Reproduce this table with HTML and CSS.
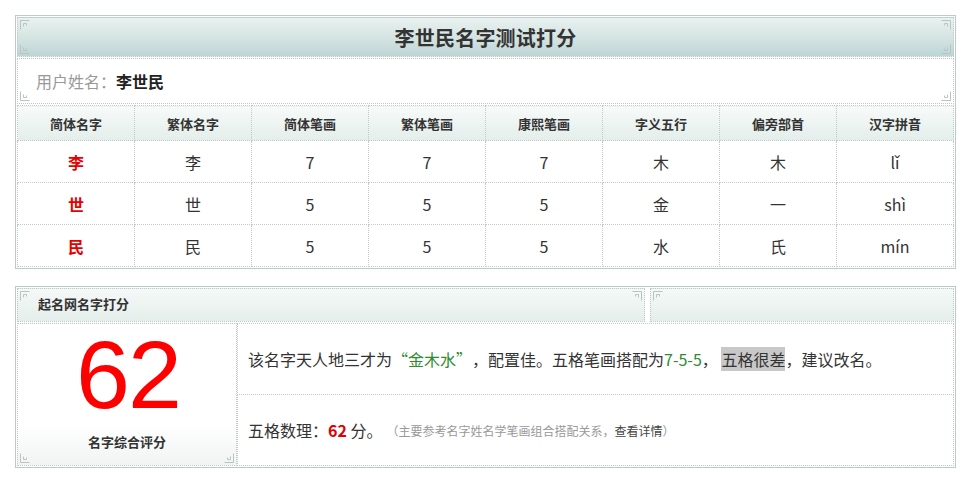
FILE: index.html
```html
<!DOCTYPE html>
<html lang="zh">
<head>
<meta charset="utf-8">
<title>李世民名字测试打分</title>
<link rel="stylesheet" href="styles.css">
</head>
<body>
<div class="page">
  <section class="panel">
    <div class="title box">
      <svg class="orn tl" viewBox="0 0 10 10"><path d="M0.5 9.5V0.5H9.5M3.5 6.5V3.5H6.5V5.5"/></svg>
      <svg class="orn tr" viewBox="0 0 10 10"><path d="M0.5 9.5V0.5H9.5M3.5 6.5V3.5H6.5V5.5"/></svg>
      <svg class="orn bl" viewBox="0 0 10 10"><path d="M0.5 9.5V0.5H9.5M3.5 6.5V3.5H6.5V5.5"/></svg>
      <svg class="orn br" viewBox="0 0 10 10"><path d="M0.5 9.5V0.5H9.5M3.5 6.5V3.5H6.5V5.5"/></svg>
      <h1>李世民名字测试打分</h1>
    </div>
    <div class="user box">
      <svg class="orn bl" viewBox="0 0 10 10"><path d="M0.5 9.5V0.5H9.5M3.5 6.5V3.5H6.5V5.5"/></svg>
      <svg class="orn br" viewBox="0 0 10 10"><path d="M0.5 9.5V0.5H9.5M3.5 6.5V3.5H6.5V5.5"/></svg>
      <span class="label">用户姓名：</span><strong>李世民</strong>
    </div>
    <table class="chars">
      <thead>
        <tr>
          <th>简体名字</th><th>繁体名字</th><th>简体笔画</th><th>繁体笔画</th><th>康熙笔画</th><th>字义五行</th><th>偏旁部首</th><th>汉字拼音</th>
        </tr>
      </thead>
      <tbody>
        <tr><td class="hz">李</td><td>李</td><td>7</td><td>7</td><td>7</td><td>木</td><td>木</td><td>lǐ</td></tr>
        <tr><td class="hz">世</td><td>世</td><td>5</td><td>5</td><td>5</td><td>金</td><td>一</td><td>shì</td></tr>
        <tr><td class="hz">民</td><td>民</td><td>5</td><td>5</td><td>5</td><td>水</td><td>氏</td><td>mín</td></tr>
      </tbody>
    </table>
  </section>

  <section class="panel score">
    <div class="score-head">
      <div class="head-cell box">
        <svg class="orn tl" viewBox="0 0 10 10"><path d="M0.5 9.5V0.5H9.5M3.5 6.5V3.5H6.5V5.5"/></svg>
        <svg class="orn tr" viewBox="0 0 10 10"><path d="M0.5 9.5V0.5H9.5M3.5 6.5V3.5H6.5V5.5"/></svg>
        <h2>起名网名字打分</h2>
      </div>
      <div class="head-cell box">
        <svg class="orn tl" viewBox="0 0 10 10"><path d="M0.5 9.5V0.5H9.5M3.5 6.5V3.5H6.5V5.5"/></svg>
      </div>
    </div>
    <div class="score-body">
      <div class="total box">
        <svg class="orn bl" viewBox="0 0 10 10"><path d="M0.5 9.5V0.5H9.5M3.5 6.5V3.5H6.5V5.5"/></svg>
        <svg class="orn br" viewBox="0 0 10 10"><path d="M0.5 9.5V0.5H9.5M3.5 6.5V3.5H6.5V5.5"/></svg>
        <div class="big">62</div>
        <div class="caption">名字综合评分</div>
      </div>
      <div class="detail">
        <div class="line box">该名字天人地三才为<span class="green">“金木水”</span>，配置佳。五格笔画搭配为<span class="green">7-5-5</span>， <span class="hl">五格很差</span>，建议改名。</div>
        <div class="line box">五格数理：<b class="red">62</b> 分。<small>（主要参考名字姓名学笔画组合搭配关系，<span class="more">查看详情</span>）</small></div>
      </div>
    </div>
  </section>
</div>
</body>
</html>
```

FILE: styles.css
```css
* { box-sizing: border-box; }
html, body { margin: 0; padding: 0; background: #fff; }
body {
  font-family: "Noto Sans CJK SC", "Noto Sans", sans-serif;
  color: #333;
  font-size: 16px;
}
.page {
  width: 975px;
  padding: 15px 19px 0 15px;
}
.panel {
  width: 941px;
  border: 1px solid #b9ccc8;
  padding: 1px;
  background: #fff;
}
.box {
  position: relative;
  border: 1px dotted #c3c9c7;
}
.orn {
  position: absolute;
  width: 10px;
  height: 10px;
  fill: none;
  stroke: #b7c6c2;
  stroke-width: 1;
}
.orn.tl { left: 2px; top: 2px; }
.orn.tr { right: 2px; top: 2px; transform: scaleX(-1); }
.orn.bl { left: 2px; bottom: 2px; transform: scaleY(-1); }
.orn.br { right: 2px; bottom: 2px; transform: scale(-1, -1); }

.title {
  height: 40px;
  background: linear-gradient(#e9f2f0, #d3e3e1 55%, #bcd5d5);
  display: flex;
  align-items: center;
  justify-content: center;
}
.title h1 {
  margin: 0;
  font-size: 20px;
  font-weight: 700;
  color: #333;
  letter-spacing: 0.2px;
}
.user {
  margin-top: 1px;
  height: 46px;
  display: flex;
  align-items: center;
  padding-left: 18px;
  font-size: 16px;
}
.user .label { color: #999; }
.user strong { color: #222; font-weight: 700; }

.chars {
  margin-top: 1px;
  width: 100%;
  border-collapse: collapse;
  table-layout: fixed;
}
.chars th, .chars td {
  border: 1px dotted #c3c9c7;
  text-align: center;
  padding: 0;
}
.chars th {
  height: 35px;
  font-size: 13px;
  font-weight: 700;
  color: #333;
  background: linear-gradient(#f7faf9, #e3eeea);
}
.chars td {
  height: 42px;
  font-size: 16px;
  color: #333;
}
.chars td.hz {
  color: #e60000;
  font-weight: 700;
}

.score { margin-top: 17px; }
.score-head {
  display: grid;
  grid-template-columns: 628px 1fr;
  column-gap: 5px;
}
.head-cell {
  height: 34px;
  background: linear-gradient(#f5f9f7, #e4eeea);
  display: flex;
  align-items: center;
  padding-left: 20px;
  padding-bottom: 3px;
}
.head-cell h2 {
  margin: 0;
  font-size: 13px;
  font-weight: 700;
  color: #333;
}
.score-body {
  display: flex;
  margin-top: 1px;
}
.total {
  width: 220px;
  height: 143px;
  flex: none;
  display: flex;
  flex-direction: column;
  align-items: center;
  background: linear-gradient(#fff 70%, #f1f4f3);
}
.big {
  font-family: "Liberation Sans", Arial, sans-serif;
  font-size: 97px;
  line-height: 108px;
  height: 108px;
  color: #ff0000;
  margin-top: -3px;
  letter-spacing: -2px;
  margin-right: -2px;
}
.caption {
  margin-top: 3px;
  font-size: 13px;
  line-height: 19px;
  font-weight: 700;
  color: #333;
}
.detail {
  flex: 1;
  display: flex;
  flex-direction: column;
}
.line {
  flex: 1;
  display: flex;
  align-items: center;
  padding-left: 10px;
  font-size: 16px;
  color: #333;
  white-space: pre;
}
.line + .line { border-top: none; }
.green { color: #2e8b2e; }
.hl { background: #c8c8c8; }
.red { color: #e00000; font-weight: 700; }
.line small {
  font-size: 12px;
  color: #999;
  margin-left: 4px;
}
.line small .more { color: #444; }
```
